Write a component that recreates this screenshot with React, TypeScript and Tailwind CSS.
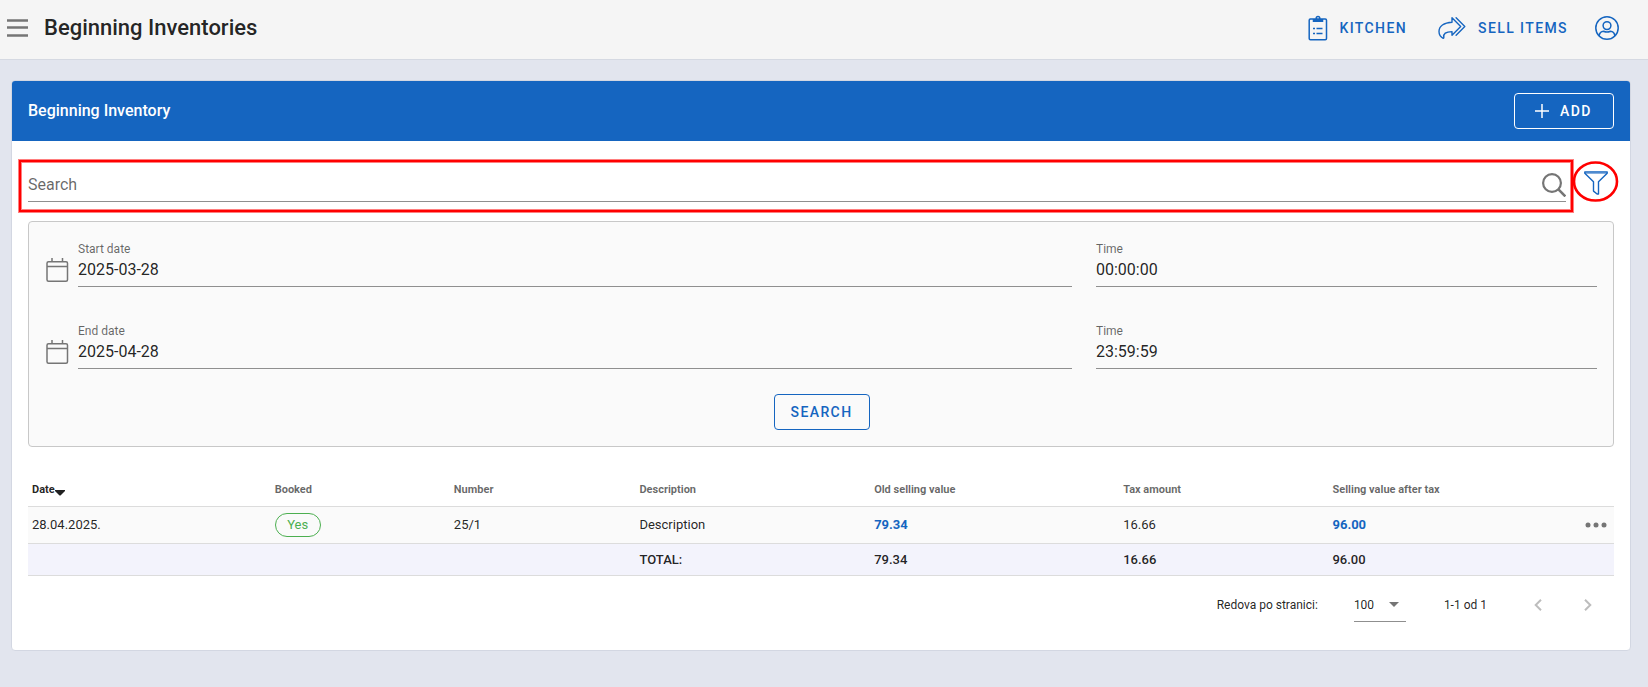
import React from 'react';

const columns = [
  { label: 'Date', width: 'w-[15.3%]' },
  { label: 'Booked', width: 'w-[11.3%]' },
  { label: 'Number', width: 'w-[11.7%]' },
  { label: 'Description', width: 'w-[14.8%]' },
  { label: 'Old selling value', width: 'w-[15.7%]' },
  { label: 'Tax amount', width: 'w-[13.2%]' },
  { label: 'Selling value after tax', width: 'w-[14%]' },
];

const rows = [
  { date: '28.04.2025.', booked: 'Yes', number: '25/1', description: 'Description', oldValue: '79.34', tax: '16.66', newValue: '96.00' },
];

function MenuIcon() {
  return (
    <svg width="22" height="20" viewBox="0 0 22 20" fill="none" stroke="#757575" strokeWidth="2.6">
      <path d="M0 2.500h21M0 9.500h21M0 17.500h21" />
    </svg>
  );
}

function ClipboardIcon() {
  return (
    <svg width="20" height="26" viewBox="0 0 20 26" fill="none" stroke="currentColor" strokeWidth="1.5">
      <rect x="1.2" y="4" width="17.3" height="20.8" rx="1.2" />
      <path d="M5.5 4v2.200h9V4" fill="currentColor" />
      <circle cx="10" cy="3.200" r="1.8" />
      <path d="M5 13.5h2M8.5 13.5h6M5 18.5h2M8.5 18.5h6" />
    </svg>
  );
}

function ForwardIcon() {
  return (
    <svg width="28" height="24" viewBox="0 0 28 24" fill="none" stroke="currentColor" strokeWidth="1.4" strokeLinejoin="round" strokeLinecap="round">
      <path d="M14 1.800v4.400C5.800 6.600 1 10.300 1 15.500c0 2.900 1.500 5.400 4.200 6.800.6-.1.7-.5.6-1-.6-3.600 1.800-5.600 8.200-5.700v3.600l8.700-8.700z" />
      <path d="M18.100 1.800l8.700 8.700-8.700 8.700" />
    </svg>
  );
}

function AccountIcon() {
  return (
    <svg width="24" height="24" viewBox="0 0 24 24" fill="none" stroke="currentColor" strokeWidth="1.5">
      <circle cx="12" cy="12" r="11.2" />
      <circle cx="12" cy="9.6" r="3.9" />
      <path d="M4.2 20c.3-3 2-4.6 4.4-4.7 2.2 1 4.600 1 6.800 0 2.400.1 4.100 1.700 4.400 4.700" />
    </svg>
  );
}

function SearchIcon() {
  return (
    <svg width="24" height="24" viewBox="0 0 24 24" fill="none" stroke="#757575" strokeWidth="2.200">
      <circle cx="10" cy="10" r="8.900" />
      <path d="M16.200 16.200l7.200 7.200" strokeWidth="2.600" />
    </svg>
  );
}

function FilterIcon() {
  return (
    <svg width="24" height="24" viewBox="0 0 24 24" fill="none" stroke="currentColor" strokeWidth="1.400" strokeLinejoin="round">
      <path d="M.8.9h22.400v1.300l-8.700 8.500v12.300h-1.400l-3.600-2.900v-9.400L.8 2.200z" />
      <path d="M1 2h22" strokeWidth="1" />
    </svg>
  );
}

function CalendarIcon() {
  return (
    <svg width="24" height="24" viewBox="0 0 24 24" fill="none" stroke="#757575" strokeWidth="1.500">
      <rect x="1" y="3.700" width="20.500" height="19.500" rx="1.500" />
      <path d="M1 8.500h20.500M6 0v3.500M16.500 0v3.500" />
    </svg>
  );
}

function Field({ id, label, value }: { id: string, label: string, value: string }) {
  return (
    <div className="flex flex-1 flex-col">
      <label htmlFor={id} className="text-xs leading-4 text-black/60">{label}</label>
      <input
        id={id}
        type="text"
        defaultValue={value}
        className="h-[30px] w-full border-b border-[#8f8f8f] bg-transparent pb-1 text-base text-black/87 outline-none"
      />
    </div>
  );
}

function PeriodRow({ id, label, date, time }: { id: string, label: string, date: string, time: string }) {
  return (
    <div className="flex">
      <div className="flex w-2/3 items-end gap-2 px-3">
        <span className="mb-[5px]"><CalendarIcon /></span>
        <Field id={`${id}-date`} label={label} value={date} />
      </div>
      <div className="flex w-1/3 px-3">
        <Field id={`${id}-time`} label="Time" value={time} />
      </div>
    </div>
  );
}

function TopBar() {
  return (
    <header className="flex h-[60px] items-center border-b border-[#d5d9e2] bg-[#f5f5f5] pr-[29px] pb-1 pl-[7px]">
      <button type="button" aria-label="Menu"><MenuIcon /></button>
      <h1 className="ml-[15px] text-[22px] leading-8 font-medium">Beginning Inventories</h1>
      <nav className="ml-auto flex items-center text-sm font-medium tracking-widest text-[#1565c0]">
        <a href="#kitchen" className="flex items-center gap-[11px]"><ClipboardIcon /> KITCHEN</a>
        <a href="#sell" className="ml-[31px] flex items-center gap-3"><ForwardIcon /> SELL ITEMS</a>
        <button type="button" aria-label="Account" className="ml-[27px]"><AccountIcon /></button>
      </nav>
    </header>
  );
}

function SearchRow() {
  return (
    <div className="flex items-start pt-7">
      <div className="relative flex flex-1 items-center border-b border-[#8f8f8f]">
        <input
          type="text"
          aria-label="Search"
          placeholder="Search"
          className="h-8 flex-1 bg-transparent pb-0.5 text-base outline-none placeholder:text-black/60"
        />
        <button type="button" aria-label="Run search"><SearchIcon /></button>
        {/* Highlight around the search field */}
        <div className="pointer-events-none absolute -top-[9px] -right-[7px] -bottom-[11px] -left-[9px] border-2 border-[#ff0000] shadow-[0_0_0_1px_#ff000080,inset_0_0_0_1px_#ff000080]" />
      </div>
      <div className="relative ml-[18px] mr-[6px] text-[#1565c0]">
        <button type="button" aria-label="Filter" className="mt-0.5 block"><FilterIcon /></button>
        {/* Highlight around the filter button */}
        <svg width="46" height="41" viewBox="0 0 46 41" fill="none" stroke="#ff0000" strokeWidth="2.600" className="pointer-events-none absolute -top-2 -left-[11px] max-w-none">
          <ellipse cx="22.500" cy="20.500" rx="21.500" ry="19" />
        </svg>
      </div>
    </div>
  );
}

function FilterPanel() {
  return (
    <form className="mt-[19px] flex flex-col gap-9 rounded border border-[#c8c8c8] bg-[#fafafa] pt-[19px] pr-1 pb-4 pl-[5px]">
      <PeriodRow id="start" label="Start date" date="2025-03-28" time="00:00:00" />
      <PeriodRow id="end" label="End date" date="2025-04-28" time="23:59:59" />
      <button
        type="button"
        className="-mt-[11px] h-9 w-24 self-center rounded border border-[#1565c0] text-sm font-medium tracking-widest text-[#1565c0]"
      >
        SEARCH
      </button>
    </form>
  );
}

function InventoryTable() {
  return (
    <table className="mt-6 w-full table-fixed border-separate border-spacing-0 text-left text-[13px] leading-5 [&_td]:border-b [&_td]:border-[#dcdcdc] [&_td]:px-1 [&_th]:border-b [&_th]:border-[#dcdcdc] [&_th]:px-1 [&_th]:pt-0.5">
      <thead>
        <tr className="h-9 text-[11px] text-black/60">
          {columns.map((col, i) => (
            <th key={col.label} className={`${col.width} font-bold ${i === 0 ? 'text-black/87' : ''}`}>
              {col.label}
              {i === 0 && (
                <svg width="10" height="6" viewBox="0 0 10 6" className="mt-1.5 inline-block align-middle" fill="#212121">
                  <path d="M0 0h10v1L5.500 5.500h-1L0 1z" />
                </svg>
              )}
            </th>
          ))}
          <th aria-label="Actions" />
        </tr>
      </thead>
      <tbody>
        {rows.map((row) => (
          <tr key={row.number} className="h-[37px] bg-[#fafafa]">
            <td>{row.date}</td>
            <td>
              <span className="flex h-6 w-[46px] items-center justify-center rounded-full border border-[#4caf50] text-[#4caf50]">{row.booked}</span>
            </td>
            <td>{row.number}</td>
            <td>{row.description}</td>
            <td className="font-bold text-[#1565c0]">{row.oldValue}</td>
            <td>{row.tax}</td>
            <td className="font-bold text-[#1565c0]">{row.newValue}</td>
            <td>
              <button type="button" aria-label="Row actions" className="mr-[3px] ml-auto block">
                <svg width="22" height="6" viewBox="0 0 22 6" fill="#757575">
                  <circle cx="3" cy="3" r="2.500" />
                  <circle cx="11" cy="3" r="2.500" />
                  <circle cx="19" cy="3" r="2.500" />
                </svg>
              </button>
            </td>
          </tr>
        ))}
      </tbody>
      <tfoot>
        <tr className="h-8 bg-[#f3f3fc] font-medium">
          <td colSpan={3} />
          <td>TOTAL:</td>
          <td>79.34</td>
          <td>16.66</td>
          <td>96.00</td>
          <td />
        </tr>
      </tfoot>
    </table>
  );
}

function Pagination() {
  return (
    <div className="mt-[11px] flex items-center justify-end pr-2 pb-[27px] text-xs">
      <label htmlFor="per-page">Redova po stranici:</label>
      <div className="relative ml-9">
        <select id="per-page" className="block h-[34px] w-[52px] appearance-none border-b border-[#8f8f8f] bg-transparent outline-none">
          <option>100</option>
        </select>
        <svg width="10" height="5" viewBox="0 0 10 5" fill="#757575" className="pointer-events-none absolute top-3.5 right-[7px]">
          <path d="M0 0h10L5 5z" />
        </svg>
      </div>
      <span className="ml-[38px]">1-1 od 1</span>
      <button type="button" aria-label="Previous page" disabled className="ml-[33px] flex size-9 items-center justify-center">
        <svg width="8" height="12" viewBox="0 0 8 12" fill="none" stroke="#bdbdbd" strokeWidth="2"><path d="M7 .7L1.700 6 7 11.300" /></svg>
      </button>
      <button type="button" aria-label="Next page" disabled className="ml-3.5 flex size-9 items-center justify-center">
        <svg width="8" height="12" viewBox="0 0 8 12" fill="none" stroke="#bdbdbd" strokeWidth="2"><path d="M1 .7L6.300 6 1 11.300" /></svg>
      </button>
    </div>
  );
}

export default function App() {
  return (
    <div className="min-h-screen bg-[#e2e5ee] font-[Roboto,sans-serif] text-black/87">
      <TopBar />
      <main className="pt-5 pr-[17px] pb-9 pl-[11px]">
        <section className="overflow-hidden rounded border border-[#d3d7e2] bg-white">
          <div className="flex h-[60px] items-center bg-[#1565c0] px-4 text-white">
            <h2 className="text-base font-medium">Beginning Inventory</h2>
            <button type="button" className="ml-auto flex h-9 w-[100px] items-center gap-[11px] rounded border border-white pl-5 text-sm font-medium tracking-widest">
              <svg width="14" height="14" viewBox="0 0 14 14" stroke="currentColor" strokeWidth="1.500"><path d="M7 0v14M0 7h14" /></svg>
              ADD
            </button>
          </div>
          <div className="px-4">
            <SearchRow />
            <FilterPanel />
            <InventoryTable />
            <Pagination />
          </div>
        </section>
      </main>
    </div>
  );
}
